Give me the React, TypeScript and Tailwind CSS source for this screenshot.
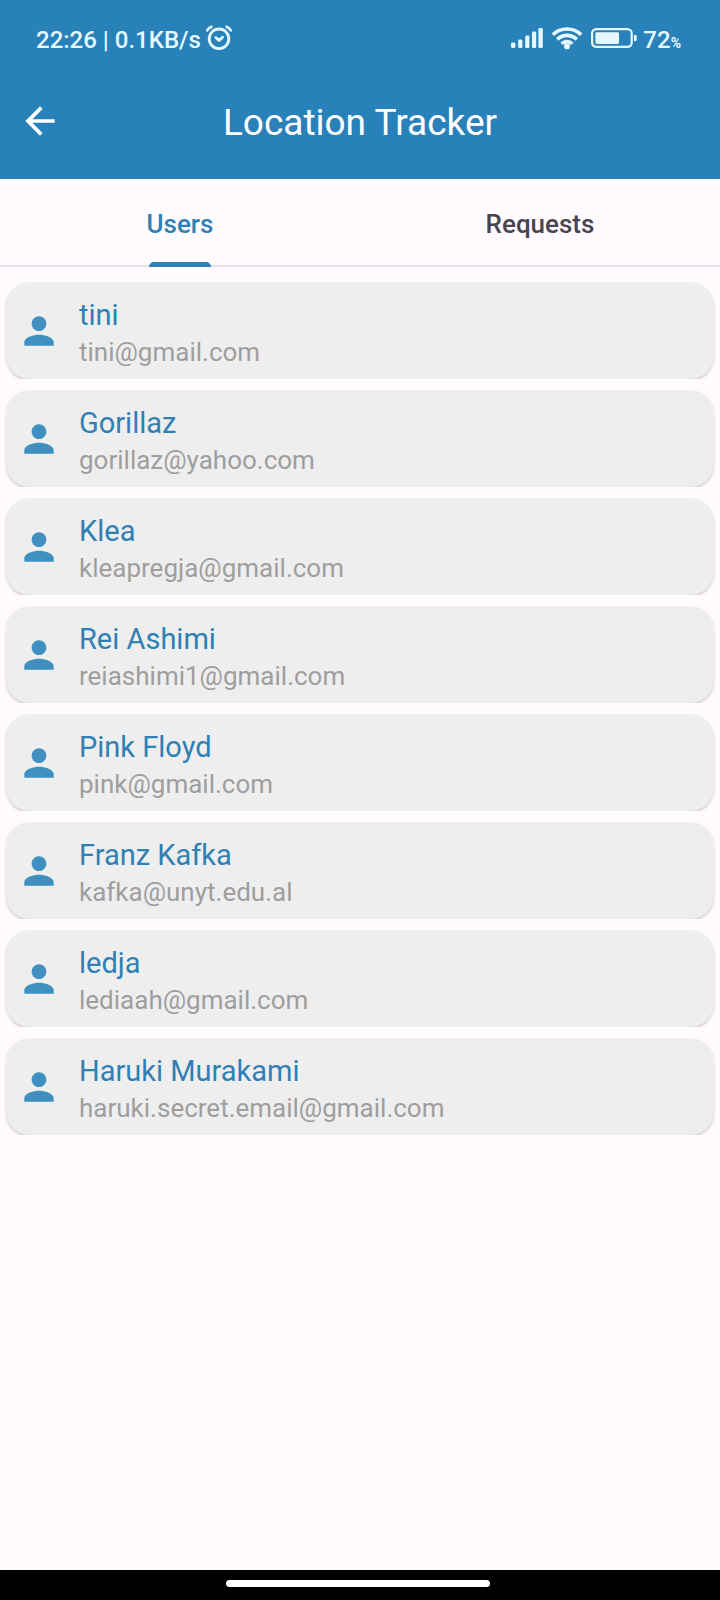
import { useState } from "react";

type User = { name: string; email: string };

const users: User[] = [
  { name: "tini", email: "tini@gmail.com" },
  { name: "Gorillaz", email: "gorillaz@yahoo.com" },
  { name: "Klea", email: "kleapregja@gmail.com" },
  { name: "Rei Ashimi", email: "reiashimi1@gmail.com" },
  { name: "Pink Floyd", email: "pink@gmail.com" },
  { name: "Franz Kafka", email: "kafka@unyt.edu.al" },
  { name: "ledja", email: "lediaah@gmail.com" },
  { name: "Haruki Murakami", email: "haruki.secret.email@gmail.com" },
];

function AlarmIcon() {
  return (
    <svg className="h-7 w-7" viewBox="0 0 28 28" fill="none" stroke="currentColor" strokeWidth="2.8" strokeLinecap="round" aria-hidden="true">
      <circle cx="14" cy="14.8" r="9.8" />
      <path d="M10.8 13.4 14 16.4l3.6-3.2" strokeLinejoin="round" />
      <path d="M2.2 6.4Q3.6 4 6.4 2.8M25.8 6.4Q24.4 4 21.6 2.8" strokeWidth="2.6" />
    </svg>
  );
}

function SignalIcon() {
  return (
    <svg className="h-5 w-8" viewBox="0 0 32 20" fill="currentColor" aria-hidden="true">
      <rect x="0" y="14.5" width="4.4" height="5.5" rx="1.4" />
      <rect x="7.2" y="11.5" width="4.2" height="8.5" rx="1.3" />
      <rect x="14.2" y="7.5" width="4.2" height="12.5" rx="1.3" />
      <rect x="21" y="3.5" width="4.2" height="16.5" rx="1.3" />
      <rect x="27.4" y="0" width="4.4" height="20" rx="1.3" />
    </svg>
  );
}

function WifiIcon() {
  return (
    <svg className="h-6 w-8" viewBox="0 0 32 24" fill="none" stroke="currentColor" strokeWidth="3.6" aria-hidden="true">
      <path d="M1.8 8.8a20.1 20.1 0 0 1 28.4 0" />
      <path d="M6.2 13.4a13.9 13.9 0 0 1 19.6 0" />
      <path d="M10.7 17.8a7.5 7.5 0 0 1 10.6 0" />
      <circle cx="16" cy="20.4" r="2.9" fill="currentColor" stroke="none" />
    </svg>
  );
}

function BatteryIcon() {
  return (
    <svg className="h-5 w-[46px]" viewBox="0 0 46 20" fill="currentColor" aria-hidden="true">
      <rect x="1.1" y="1.1" width="39.6" height="17.8" rx="4.4" fill="none" stroke="currentColor" strokeWidth="2.2" />
      <rect x="4.4" y="4.2" width="23.6" height="11.8" rx="1.4" />
      <path d="M43 7h1.4q1.3 0 1.3 1.3v3.4q0 1.3-1.3 1.3H43z" />
    </svg>
  );
}

function PersonIcon() {
  return (
    <svg className="size-11 shrink-0" viewBox="0 0 24 24" fill="#3f8fc1" aria-hidden="true">
      <path d="M12 12c2.21 0 4-1.79 4-4s-1.79-4-4-4-4 1.79-4 4 1.79 4 4 4zm0 2c-2.67 0-8 1.34-8 4v2h16v-2c0-2.66-5.33-4-8-4z" />
    </svg>
  );
}

function StatusBar() {
  return (
    <div className="flex h-[76px] items-center justify-between pr-[39px] pl-9 text-2xl font-medium text-[#e6f8ff]">
      <div className="flex items-center gap-1">
        <span className="pt-[3px]">22:26 | 0.1KB/s</span>
        <AlarmIcon />
      </div>
      <div className="flex items-center gap-2">
        <SignalIcon />
        <WifiIcon />
        <div className="flex items-center gap-1.5">
          <BatteryIcon />
          <span className="flex items-baseline pt-[3px]">
            72<span className="text-sm font-bold">%</span>
          </span>
        </div>
      </div>
    </div>
  );
}

export default function App() {
  const [tab, setTab] = useState("Users");

  return (
    <div className="flex min-h-screen flex-col bg-[#fffbff] font-['Roboto','Noto_Sans',sans-serif]">
      <header className="bg-[#2981ba] text-white">
        <StatusBar />
        <div className="grid h-[103px] grid-cols-[64px_1fr_64px] items-start px-[18px] pt-[23px]">
          <button type="button" aria-label="Back" className="size-11">
            <svg className="size-11" viewBox="0 0 24 24" fill="currentColor" aria-hidden="true">
              <path d="M20 11H7.83l5.59-5.59L12 4l-8 8 8 8 1.41-1.41L7.83 13H20v-2z" />
            </svg>
          </button>
          <h1 className="text-center text-[37px] leading-12">Location Tracker</h1>
        </div>
      </header>

      <div role="tablist" className="grid h-[88px] grid-cols-2 border-b-2 border-[#e6e1e8]">
        {["Users", "Requests"].map((name) => {
          const active = name === tab;
          return (
            <button
              key={name}
              type="button"
              role="tab"
              aria-selected={active}
              onClick={() => setTab(name)}
              className={`relative pt-1 text-[26px] font-medium ${active ? "text-[#2f80b4]" : "text-[#49454f]"}`}
            >
              {name}
              {active && (
                <span className="absolute inset-x-0 -bottom-0.5 mx-auto h-[5px] w-[62px] rounded-t-[5px] bg-[#2f80b4]" />
              )}
            </button>
          );
        })}
      </div>

      <main className="flex-1 pt-[15px]">
        {tab === "Users" && (
          <ul className="flex flex-col gap-[11px]">
            {users.map((user) => (
              <li key={user.email} className="overflow-hidden px-1.5">
                <div className="flex h-[97px] items-center gap-[18px] rounded-3xl bg-[#eeeeee] px-[11px] shadow-[0_2px_3px_rgba(0,0,0,0.18)]">
                  <PersonIcon />
                  <div className="min-w-0 pt-1.5">
                    <p className="truncate text-[29px] leading-9 text-[#2f80b4]">{user.name}</p>
                    <p className="truncate text-[26px] leading-[38px] text-[#9e9e9e]">{user.email}</p>
                  </div>
                </div>
              </li>
            ))}
          </ul>
        )}
      </main>

      <footer className="flex h-[30px] justify-center bg-black pt-2.5 pr-1">
        <div className="h-[7px] w-[37%] rounded-full bg-white" />
      </footer>
    </div>
  );
}
